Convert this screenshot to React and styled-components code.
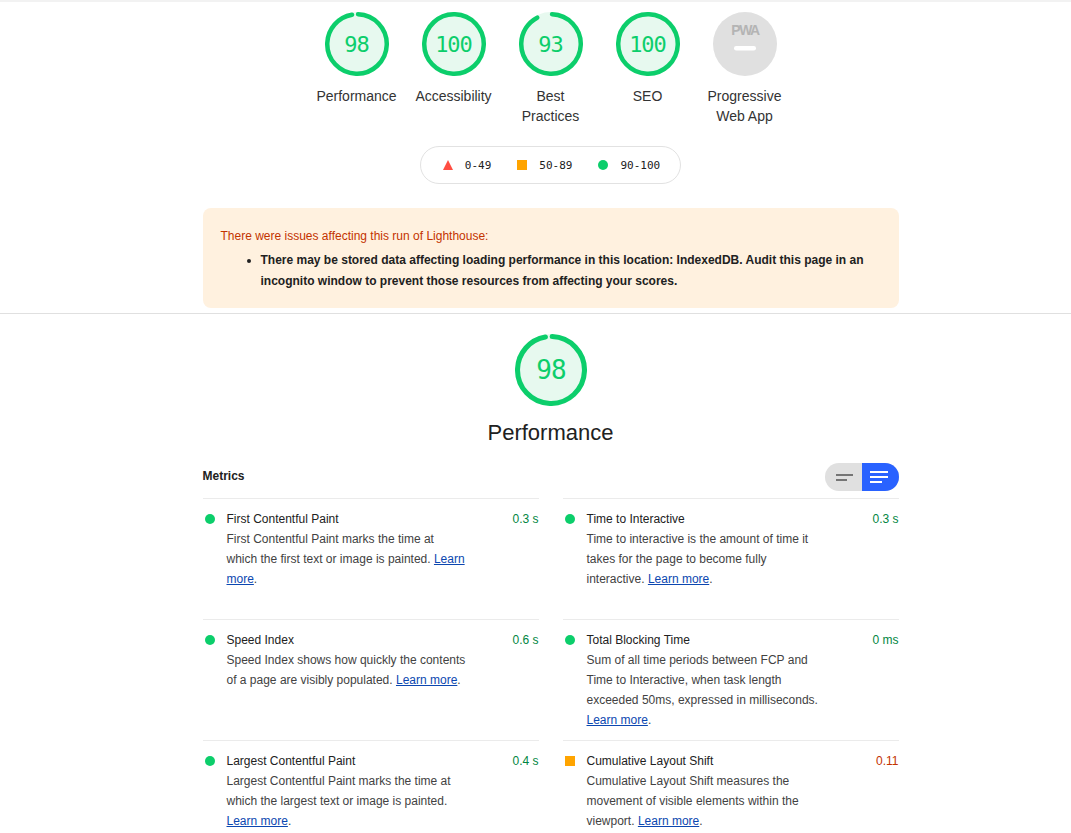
import React from "react";
import styled, { createGlobalStyle } from "styled-components";

const GlobalStyle = createGlobalStyle`
  html, body {
    margin: 0;
    padding: 0;
    background: #fff;
    height: 833px;
    overflow: hidden;
  }
  body {
    font-family: "Liberation Sans", Arial, sans-serif;
    color: #212121;
  }
`;

const GREEN = "#0cce6b";

const categories = [
  { score: 98, label: "Performance" },
  { score: 100, label: "Accessibility" },
  { score: 93, label: "Best Practices" },
  { score: 100, label: "SEO" },
];

const metrics = [
  {
    title: "First Contentful Paint",
    value: "0.3 s",
    text: "First Contentful Paint marks the time at which the first text or image is painted.",
  },
  {
    title: "Time to Interactive",
    value: "0.3 s",
    text: "Time to interactive is the amount of time it takes for the page to become fully interactive.",
  },
  {
    title: "Speed Index",
    value: "0.6 s",
    text: "Speed Index shows how quickly the contents of a page are visibly populated.",
  },
  {
    title: "Total Blocking Time",
    value: "0 ms",
    text: "Sum of all time periods between FCP and Time to Interactive, when task length exceeded 50ms, expressed in milliseconds.",
  },
  {
    title: "Largest Contentful Paint",
    value: "0.4 s",
    text: "Largest Contentful Paint marks the time at which the largest text or image is painted.",
  },
  {
    title: "Cumulative Layout Shift",
    value: "0.11",
    average: true,
    text: "Cumulative Layout Shift measures the movement of visible elements within the viewport.",
  },
];

const Gauge = ({ score, size }) => {
  const r = 29.75;
  const len = 2 * Math.PI * r;
  const gap = 0.014;
  return (
    <GaugeBox $size={size}>
      <svg viewBox="0 0 64 64" width={size} height={size}>
        <circle cx="32" cy="32" r="32" fill="#e7f9ef" />
        <circle
          cx="32"
          cy="32"
          r={r}
          fill="none"
          stroke={GREEN}
          strokeWidth="4.5"
          strokeDasharray={`${(score === 100 ? 1 : score / 100 - gap) * len} ${len * 2}`}
          strokeLinecap={score === 100 ? "butt" : "round"}
          transform="rotate(-88 32 32)"
        />
      </svg>
      <GaugeScore $size={size}>{score}</GaugeScore>
    </GaugeBox>
  );
};

export default function App() {
  return (
    <Page>
      <GlobalStyle />
      <TopLine />
      <Gauges>
        {categories.map((c) => (
          <GaugeItem key={c.label}>
            <Gauge score={c.score} size={64} />
            <GaugeLabel>{c.label}</GaugeLabel>
          </GaugeItem>
        ))}
        <GaugeItem>
          <PwaBadge>
            <svg viewBox="0 0 64 64" width="64" height="64">
              <text x="32" y="23" textAnchor="middle" fontFamily="Liberation Sans" fontWeight="700" fontSize="14" letterSpacing="-1.5" fill="#b4b4b4">
                PWA
              </text>
              <rect x="21" y="34" width="22" height="4.5" rx="2.25" fill="#fff" />
            </svg>
          </PwaBadge>
          <GaugeLabel>Progressive Web App</GaugeLabel>
        </GaugeItem>
      </Gauges>

      <Legend>
        <LegendItem>
          <svg width="10" height="10" viewBox="0 0 10 10">
            <polygon points="5,0 10,10 0,10" fill="#ff4e42" />
          </svg>
          0-49
        </LegendItem>
        <LegendItem>
          <LegendSquare />
          50-89
        </LegendItem>
        <LegendItem>
          <LegendDot />
          90-100
        </LegendItem>
      </Legend>

      <Warning>
        <WarningTitle>There were issues affecting this run of Lighthouse:</WarningTitle>
        <WarningList>
          <li>
            There may be stored data affecting loading performance in this location: IndexedDB. Audit this page in an
            incognito window to prevent those resources from affecting your scores.
          </li>
        </WarningList>
      </Warning>

      <Divider />

      <CategoryHead>
        <Gauge score={98} size={72} />
        <CategoryTitle>Performance</CategoryTitle>
      </CategoryHead>

      <Section>
        <MetricsHeader>
          <MetricsTitle>Metrics</MetricsTitle>
          <Toggle>
            <ToggleSide $pad="0 0 0 3px">
              <svg width="17" height="7" viewBox="0 0 17 7">
                <rect x="0" y="0" width="17" height="2" fill="#757575" />
                <rect x="0" y="5" width="11" height="2" fill="#757575" />
              </svg>
            </ToggleSide>
            <ToggleSide $active $pad="0 3px 0 0">
              <svg width="18" height="12" viewBox="0 0 18 12">
                <rect x="0" y="0" width="18" height="2" fill="#fff" />
                <rect x="0" y="5" width="18" height="2" fill="#fff" />
                <rect x="0" y="10" width="12" height="2" fill="#fff" />
              </svg>
            </ToggleSide>
          </Toggle>
        </MetricsHeader>
        <MetricGrid>
          {metrics.map((m) => (
            <Metric key={m.title}>
              <MetricIcon $average={m.average} />
              <MetricBody>
                <MetricTop>
                  <MetricTitle>{m.title}</MetricTitle>
                  <MetricValue $average={m.average}>{m.value}</MetricValue>
                </MetricTop>
                <MetricText>
                  {m.text} <MetricLink href="#">Learn more</MetricLink>.
                </MetricText>
              </MetricBody>
            </Metric>
          ))}
        </MetricGrid>
      </Section>
    </Page>
  );
}

const Page = styled.div`
  display: flex;
  flex-direction: column;
  align-items: center;
  width: 1101px;
`;

const TopLine = styled.div`
  align-self: stretch;
  height: 2px;
  background: #f2f2f2;
`;

const Gauges = styled.div`
  display: flex;
  justify-content: center;
  padding-top: 10px;
`;

const GaugeItem = styled.div`
  display: flex;
  flex-direction: column;
  align-items: center;
  width: 97px;
  height: 134px;
`;

const GaugeBox = styled.div`
  position: relative;
  width: ${(p) => p.$size}px;
  height: ${(p) => p.$size}px;
  margin-left: ${(p) => (p.$size === 72 ? 1 : 0)}px;
  svg {
    display: block;
  }
`;

const GaugeScore = styled.div`
  position: absolute;
  inset: 0;
  display: flex;
  align-items: center;
  justify-content: center;
  font-family: "DejaVu Sans Mono", "Liberation Mono", monospace;
  font-size: ${(p) => (p.$size === 72 ? 26 : 22)}px;
  letter-spacing: -1px;
  color: ${GREEN};
`;

const GaugeLabel = styled.div`
  margin-top: 10px;
  width: 88px;
  font-size: 14px;
  line-height: 20px;
  text-align: center;
  color: #333;
`;

const PwaBadge = styled.div`
  width: 64px;
  height: 64px;
  border-radius: 50%;
  background: #e0e0e0;
  svg {
    display: block;
  }
`;

const Legend = styled.div`
  display: flex;
  align-items: center;
  justify-content: center;
  gap: 26px;
  box-sizing: border-box;
  width: 261px;
  height: 38px;
  padding-left: 2px;
  border: 1px solid #e2e2e2;
  border-radius: 19px;
`;

const LegendItem = styled.div`
  display: flex;
  align-items: center;
  gap: 12px;
  font-family: "DejaVu Sans Mono", "Liberation Mono", monospace;
  font-size: 11px;
  color: #212121;
`;

const LegendSquare = styled.span`
  width: 10px;
  height: 10px;
  background: #ffa400;
`;

const LegendDot = styled.span`
  width: 10px;
  height: 10px;
  border-radius: 50%;
  background: ${GREEN};
`;

const Warning = styled.div`
  box-sizing: border-box;
  width: 696px;
  height: 100px;
  margin-top: 24px;
  padding: 18px 18px 0;
  border-radius: 8px;
  background: #fff1df;
  font-size: 12px;
  line-height: 20px;
`;

const WarningTitle = styled.div`
  color: #c33300;
`;

const WarningList = styled.ul`
  margin: 4px 0 0;
  padding-left: 40px;
  font-weight: 700;
  line-height: 21px;
  color: #212121;
`;

const Divider = styled.div`
  align-self: stretch;
  height: 1px;
  margin-top: 5px;
  background: #e0e0e0;
`;

const CategoryHead = styled.div`
  display: flex;
  flex-direction: column;
  align-items: center;
  margin-top: 20px;
`;

const CategoryTitle = styled.div`
  margin-top: 12px;
  font-size: 22px;
  line-height: 30px;
  color: #212121;
`;

const Section = styled.div`
  width: 696px;
  margin-top: 15px;
`;

const MetricsHeader = styled.div`
  display: flex;
  align-items: center;
  justify-content: space-between;
  height: 28px;
  margin-bottom: 7px;
`;

const MetricsTitle = styled.div`
  margin-bottom: 2px;
  font-size: 12px;
  font-weight: 700;
  color: #212121;
`;

const Toggle = styled.div`
  display: flex;
  width: 74px;
  height: 28px;
  border-radius: 14px;
  overflow: hidden;
  background: #e0e0e0;
`;

const ToggleSide = styled.div`
  display: flex;
  align-items: center;
  justify-content: center;
  flex: 1;
  box-sizing: border-box;
  padding: ${(p) => p.$pad};
  background: ${(p) => (p.$active ? "#2962ff" : "transparent")};
  svg {
    display: block;
  }
`;

const MetricGrid = styled.div`
  display: grid;
  grid-template-columns: 336px 336px;
  column-gap: 24px;
  grid-auto-rows: 121px;
`;

const Metric = styled.div`
  display: flex;
  gap: 12px;
  box-sizing: border-box;
  padding: 10px 0 0 2px;
  border-top: 1px solid #ebebeb;
`;

const MetricIcon = styled.span`
  flex: none;
  width: 10px;
  height: 10px;
  margin-top: 5px;
  border-radius: ${(p) => (p.$average ? 0 : "50%")};
  background: ${(p) => (p.$average ? "#ffa400" : GREEN)};
`;

const MetricBody = styled.div`
  flex: 1;
  min-width: 0;
  font-size: 12px;
  line-height: 20px;
`;

const MetricTop = styled.div`
  display: flex;
  justify-content: space-between;
`;

const MetricTitle = styled.div`
  color: #212121;
`;

const MetricValue = styled.div`
  color: ${(p) => (p.$average ? "#c33300" : "#018642")};
`;

const MetricText = styled.div`
  max-width: 240px;
  color: #424242;
`;

const MetricLink = styled.a`
  color: #0c47b0;
`;
